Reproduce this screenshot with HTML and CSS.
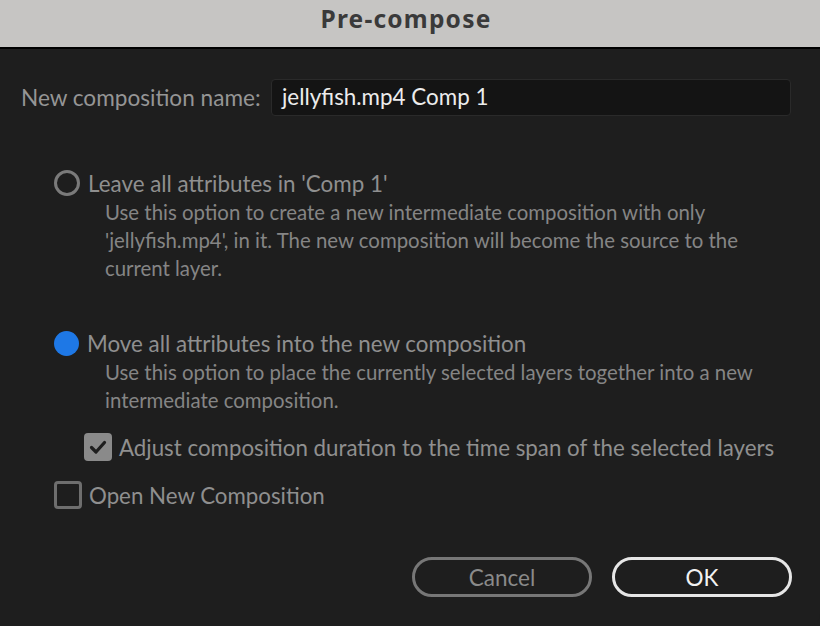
FILE: index.html
```html
<!DOCTYPE html>
<html>
<head>
<meta charset="utf-8">
<link rel="stylesheet" href="styles.css">
</head>
<body>
<div class="window">
  <div class="titlebar">Pre-compose</div>
  <div class="content">
    <div class="name-row">
      <label class="name-label">New composition name:</label>
      <div class="input">jellyfish.mp4 Comp 1</div>
    </div>

    <div class="option first">
      <div class="opt-head">
        <span class="radio"></span>
        <span class="opt-label">Leave all attributes in 'Comp 1'</span>
      </div>
      <p class="desc">Use this option to create a new intermediate composition with only 'jellyfish.mp4', in it. The new composition will become the source to the current layer.</p>
    </div>

    <div class="option second">
      <div class="opt-head">
        <span class="radio selected"></span>
        <span class="opt-label">Move all attributes into the new composition</span>
      </div>
      <p class="desc">Use this option to place the currently selected layers together into a new intermediate composition.</p>
    </div>

    <div class="check-row nested">
      <span class="checkbox checked">
        <svg viewBox="0 0 28 28" width="28" height="28"><path d="M7.5 14.5 L12 19 L20.5 9.5" fill="none" stroke="#1e1e1e" stroke-width="3.2" stroke-linecap="round" stroke-linejoin="round"/></svg>
      </span>
      <span class="check-label">Adjust composition duration to the time span of the selected layers</span>
    </div>

    <div class="check-row">
      <span class="checkbox"></span>
      <span class="check-label">Open New Composition</span>
    </div>

    <div class="buttons">
      <button class="btn cancel">Cancel</button>
      <button class="btn ok">OK</button>
    </div>
  </div>
</div>
</body>
</html>
```

FILE: styles.css
```css
* { box-sizing: border-box; }
html, body {
  margin: 0;
  padding: 0;
  width: 820px;
  height: 626px;
  overflow: hidden;
  background: #1e1e1e;
}
.window {
  width: 820px;
  height: 626px;
  display: flex;
  flex-direction: column;
  font-family: Lato, "Noto Sans", sans-serif;
  background: #1e1e1e;
  border-bottom-right-radius: 12px;
}
.titlebar {
  height: 49px;
  background: #c6c5c3;
  border-bottom: 2px solid #000;
  color: #3a3a3a;
  font-family: "Noto Sans", sans-serif;
  font-weight: 700;
  font-size: 24.5px;
  letter-spacing: 1.2px;
  text-align: center;
  line-height: 37px;
  padding-right: 8px;
}
.content {
  flex: 1;
  display: flex;
  flex-direction: column;
  padding: 30px 28px 0 21px;
}
.name-row {
  display: flex;
  align-items: center;
  gap: 12px;
}
.name-label {
  color: #959595;
  font-size: 22.6px;
  width: 238px;
  white-space: nowrap;
}
.input {
  width: 520px;
  height: 37px;
  background: #141414;
  border: 1px solid #2a2a2a;
  border-radius: 4px;
  color: #ececec;
  font-size: 22.4px;
  padding-left: 10px;
  line-height: 34px;
}
.option {
  margin-left: 33px;
}
.option.first { margin-top: 52px; }
.option.second { margin-top: 46px; }
.opt-head {
  display: flex;
  align-items: center;
  gap: 8px;
  height: 30px;
}
.radio {
  width: 26px;
  height: 26px;
  border-radius: 50%;
  border: 3px solid #7a7a7a;
  flex: none;
}
.radio.selected {
  border: none;
  background: #1e78e6;
  width: 25px;
  height: 25px;
}
.opt-label {
  color: #8f8f8f;
  font-size: 22.4px;
  white-space: nowrap;
}
.desc {
  margin: 0 0 0 51px;
  color: #858585;
  font-size: 20.4px;
  line-height: 28px;
  width: 690px;
}
.check-row {
  display: flex;
  align-items: center;
  gap: 7px;
  margin-left: 33px;
  margin-top: 20px;
  height: 28px;
}
.check-row.nested {
  margin-left: 63px;
  margin-top: 19px;
}
.checkbox {
  width: 28px;
  height: 28px;
  border: 3px solid #6e6e6e;
  border-radius: 4px;
  flex: none;
  display: flex;
}
.checkbox.checked {
  border: none;
  background: #8a8a8a;
}
.check-label {
  color: #8f8f8f;
  font-size: 22.3px;
  white-space: nowrap;
}
.buttons {
  display: flex;
  justify-content: flex-end;
  gap: 20px;
  margin-top: 48px;
}
.btn {
  width: 180px;
  height: 40px;
  border-radius: 20px;
  background: transparent;
  font-family: Lato, "Noto Sans", sans-serif;
  font-size: 22.5px;
  padding: 0;
}
.btn.cancel {
  border: 3px solid #777;
  color: #8a8a8a;
}
.btn.ok {
  border: 3px solid #e6e6e6;
  color: #f2f2f2;
}
```
